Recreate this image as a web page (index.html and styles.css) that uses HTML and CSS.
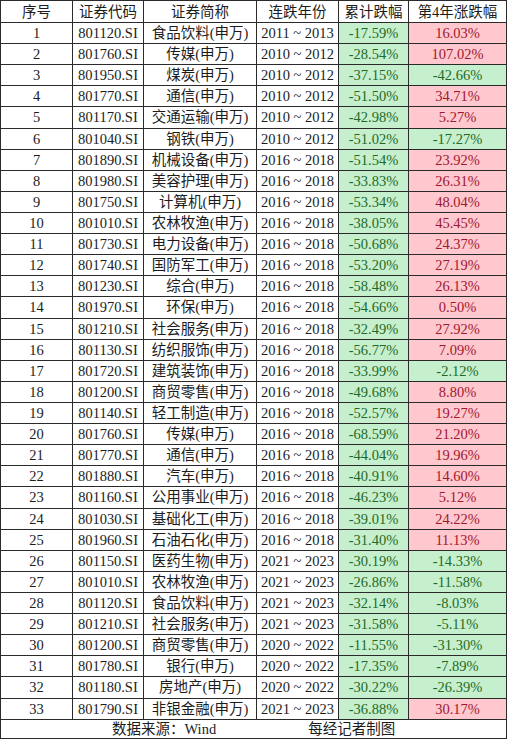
FILE: index.html
```html
<!DOCTYPE html>
<html lang="zh-CN">
<head>
<meta charset="utf-8">
<title>申万行业连跌年份</title>
<link rel="stylesheet" href="styles.css">
</head>
<body>
<table class="sheet">
<colgroup>
<col class="c1"><col class="c2"><col class="c3"><col class="c4"><col class="c5"><col class="c6">
</colgroup>
<thead>
<tr><th>序号</th><th>证券代码</th><th>证券简称</th><th>连跌年份</th><th>累计跌幅</th><th>第4年涨跌幅</th></tr>
</thead>
<tbody>
<tr><td>1</td><td>801120.SI</td><td>食品饮料(申万)</td><td>2011 ~ 2013</td><td class="neg">-17.59%</td><td class="pos">16.03%</td></tr>
<tr><td>2</td><td>801760.SI</td><td>传媒(申万)</td><td>2010 ~ 2012</td><td class="neg">-28.54%</td><td class="pos">107.02%</td></tr>
<tr><td>3</td><td>801950.SI</td><td>煤炭(申万)</td><td>2010 ~ 2012</td><td class="neg">-37.15%</td><td class="neg">-42.66%</td></tr>
<tr><td>4</td><td>801770.SI</td><td>通信(申万)</td><td>2010 ~ 2012</td><td class="neg">-51.50%</td><td class="pos">34.71%</td></tr>
<tr><td>5</td><td>801170.SI</td><td>交通运输(申万)</td><td>2010 ~ 2012</td><td class="neg">-42.98%</td><td class="pos">5.27%</td></tr>
<tr><td>6</td><td>801040.SI</td><td>钢铁(申万)</td><td>2010 ~ 2012</td><td class="neg">-51.02%</td><td class="neg">-17.27%</td></tr>
<tr><td>7</td><td>801890.SI</td><td>机械设备(申万)</td><td>2016 ~ 2018</td><td class="neg">-51.54%</td><td class="pos">23.92%</td></tr>
<tr><td>8</td><td>801980.SI</td><td>美容护理(申万)</td><td>2016 ~ 2018</td><td class="neg">-33.83%</td><td class="pos">26.31%</td></tr>
<tr><td>9</td><td>801750.SI</td><td>计算机(申万)</td><td>2016 ~ 2018</td><td class="neg">-53.34%</td><td class="pos">48.04%</td></tr>
<tr><td>10</td><td>801010.SI</td><td>农林牧渔(申万)</td><td>2016 ~ 2018</td><td class="neg">-38.05%</td><td class="pos">45.45%</td></tr>
<tr><td>11</td><td>801730.SI</td><td>电力设备(申万)</td><td>2016 ~ 2018</td><td class="neg">-50.68%</td><td class="pos">24.37%</td></tr>
<tr><td>12</td><td>801740.SI</td><td>国防军工(申万)</td><td>2016 ~ 2018</td><td class="neg">-53.20%</td><td class="pos">27.19%</td></tr>
<tr><td>13</td><td>801230.SI</td><td>综合(申万)</td><td>2016 ~ 2018</td><td class="neg">-58.48%</td><td class="pos">26.13%</td></tr>
<tr><td>14</td><td>801970.SI</td><td>环保(申万)</td><td>2016 ~ 2018</td><td class="neg">-54.66%</td><td class="pos">0.50%</td></tr>
<tr><td>15</td><td>801210.SI</td><td>社会服务(申万)</td><td>2016 ~ 2018</td><td class="neg">-32.49%</td><td class="pos">27.92%</td></tr>
<tr><td>16</td><td>801130.SI</td><td>纺织服饰(申万)</td><td>2016 ~ 2018</td><td class="neg">-56.77%</td><td class="pos">7.09%</td></tr>
<tr><td>17</td><td>801720.SI</td><td>建筑装饰(申万)</td><td>2016 ~ 2018</td><td class="neg">-33.99%</td><td class="neg">-2.12%</td></tr>
<tr><td>18</td><td>801200.SI</td><td>商贸零售(申万)</td><td>2016 ~ 2018</td><td class="neg">-49.68%</td><td class="pos">8.80%</td></tr>
<tr><td>19</td><td>801140.SI</td><td>轻工制造(申万)</td><td>2016 ~ 2018</td><td class="neg">-52.57%</td><td class="pos">19.27%</td></tr>
<tr><td>20</td><td>801760.SI</td><td>传媒(申万)</td><td>2016 ~ 2018</td><td class="neg">-68.59%</td><td class="pos">21.20%</td></tr>
<tr><td>21</td><td>801770.SI</td><td>通信(申万)</td><td>2016 ~ 2018</td><td class="neg">-44.04%</td><td class="pos">19.96%</td></tr>
<tr><td>22</td><td>801880.SI</td><td>汽车(申万)</td><td>2016 ~ 2018</td><td class="neg">-40.91%</td><td class="pos">14.60%</td></tr>
<tr><td>23</td><td>801160.SI</td><td>公用事业(申万)</td><td>2016 ~ 2018</td><td class="neg">-46.23%</td><td class="pos">5.12%</td></tr>
<tr><td>24</td><td>801030.SI</td><td>基础化工(申万)</td><td>2016 ~ 2018</td><td class="neg">-39.01%</td><td class="pos">24.22%</td></tr>
<tr><td>25</td><td>801960.SI</td><td>石油石化(申万)</td><td>2016 ~ 2018</td><td class="neg">-31.40%</td><td class="pos">11.13%</td></tr>
<tr><td>26</td><td>801150.SI</td><td>医药生物(申万)</td><td>2021 ~ 2023</td><td class="neg">-30.19%</td><td class="neg">-14.33%</td></tr>
<tr><td>27</td><td>801010.SI</td><td>农林牧渔(申万)</td><td>2021 ~ 2023</td><td class="neg">-26.86%</td><td class="neg">-11.58%</td></tr>
<tr><td>28</td><td>801120.SI</td><td>食品饮料(申万)</td><td>2021 ~ 2023</td><td class="neg">-32.14%</td><td class="neg">-8.03%</td></tr>
<tr><td>29</td><td>801210.SI</td><td>社会服务(申万)</td><td>2021 ~ 2023</td><td class="neg">-31.58%</td><td class="neg">-5.11%</td></tr>
<tr><td>30</td><td>801200.SI</td><td>商贸零售(申万)</td><td>2020 ~ 2022</td><td class="neg">-11.55%</td><td class="neg">-31.30%</td></tr>
<tr><td>31</td><td>801780.SI</td><td>银行(申万)</td><td>2020 ~ 2022</td><td class="neg">-17.35%</td><td class="neg">-7.89%</td></tr>
<tr><td>32</td><td>801180.SI</td><td>房地产(申万)</td><td>2020 ~ 2022</td><td class="neg">-30.22%</td><td class="neg">-26.39%</td></tr>
<tr><td>33</td><td>801790.SI</td><td>非银金融(申万)</td><td>2021 ~ 2023</td><td class="neg">-36.88%</td><td class="pos">30.17%</td></tr>
</tbody>
<tfoot>
<tr><td colspan="6" class="foot"><div class="foot-line"><span class="src">数据来源：Wind</span><span class="credit">每经记者制图</span></div></td></tr>
</tfoot>
</table>
</body>
</html>
```

FILE: styles.css
```css
html, body {
  margin: 0;
  padding: 0;
  background: #ffffff;
}

.sheet {
  border-collapse: collapse;
  table-layout: fixed;
  width: 506px;
  font-family: "Liberation Serif", "Noto Sans CJK SC", serif;
  font-size: 14.5px;
  color: #1c1c1c;
}

.c1 { width: 72px; }
.c2 { width: 71px; }
.c3 { width: 113px; }
.c4 { width: 82px; }
.c5 { width: 70px; }
.c6 { width: 98px; }

.sheet th,
.sheet td {
  border: 1px solid #2a2a2a;
  padding: 0;
  text-align: center;
  vertical-align: middle;
  white-space: nowrap;
  line-height: 16px;
}

.sheet th {
  font-weight: normal;
  height: 21px;
}

.sheet tbody td {
  height: 20.12px;
}

.sheet .neg {
  background: #c6efce;
  color: #1f6b26;
}

.sheet .pos {
  background: #ffc7ce;
  color: #a01830;
}

.sheet .foot {
  height: 18px;
}

.foot-line {
  display: flex;
  align-items: center;
}

.src {
  margin-left: 111px;
}

.credit {
  margin-left: 92px;
}
```
